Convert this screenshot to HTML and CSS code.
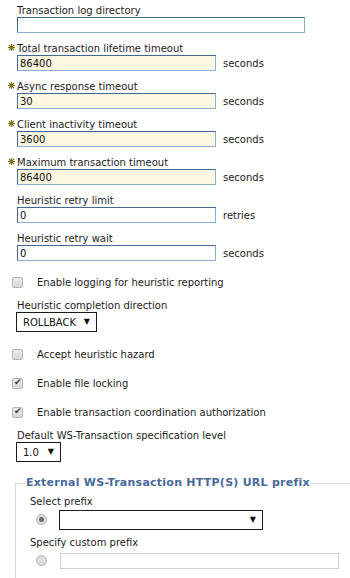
FILE: index.html
```html
<!DOCTYPE html>
<html lang="en">

<head>
    <meta http-equiv='Content-Type' content='text/html; charset=utf-8' />
    <meta name='viewport' content='width=device-width' />
    <link rel="stylesheet" href="styles.css">
</head>

<body>
    <form class="form" name="txform">
        <div class="field">
            <label class="lbl" for="logdir">Transaction log directory</label>
            <input id="logdir" class="txt wide" type="text">
        </div>
        <div class="field">
            <label class="lbl" for="total"><span class="req"><svg width="7" height="7" viewBox="0 0 7 7"><path d="M3.5 0v7M0 3.5h7M1 1l5 5M6 1l-5 5"/></svg></span>Total transaction lifetime timeout</label>
            <div class="row"><input id="total" class="txt need" type="text" value="86400"><span class="unit">seconds</span></div>
        </div>
        <div class="field">
            <label class="lbl" for="async"><span class="req"><svg width="7" height="7" viewBox="0 0 7 7"><path d="M3.5 0v7M0 3.5h7M1 1l5 5M6 1l-5 5"/></svg></span>Async response timeout</label>
            <div class="row"><input id="async" class="txt need" type="text" value="30"><span class="unit">seconds</span></div>
        </div>
        <div class="field">
            <label class="lbl" for="client"><span class="req"><svg width="7" height="7" viewBox="0 0 7 7"><path d="M3.5 0v7M0 3.5h7M1 1l5 5M6 1l-5 5"/></svg></span>Client inactivity timeout</label>
            <div class="row"><input id="client" class="txt need" type="text" value="3600"><span class="unit">seconds</span></div>
        </div>
        <div class="field">
            <label class="lbl" for="maxtx"><span class="req"><svg width="7" height="7" viewBox="0 0 7 7"><path d="M3.5 0v7M0 3.5h7M1 1l5 5M6 1l-5 5"/></svg></span>Maximum transaction timeout</label>
            <div class="row"><input id="maxtx" class="txt need" type="text" value="86400"><span class="unit">seconds</span></div>
        </div>
        <div class="field">
            <label class="lbl" for="retry">Heuristic retry limit</label>
            <div class="row"><input id="retry" class="txt" type="text" value="0"><span class="unit">retries</span></div>
        </div>
        <div class="field">
            <label class="lbl" for="wait">Heuristic retry wait</label>
            <div class="row"><input id="wait" class="txt" type="text" value="0"><span class="unit">seconds</span></div>
        </div>

        <label class="check first"><input class="cb" type="checkbox">Enable logging for heuristic reporting</label>

        <div class="field">
            <label class="lbl" for="dir">Heuristic completion direction</label>
            <span class="sel"><select id="dir" class="dd dir">
                <option selected>ROLLBACK</option>
                <option>COMMIT</option>
                <option>MANUAL</option>
            </select></span>
        </div>

        <label class="check"><input class="cb" type="checkbox">Accept heuristic hazard</label>
        <label class="check"><input class="cb" type="checkbox" checked>Enable file locking</label>
        <label class="check"><input class="cb" type="checkbox" checked>Enable transaction coordination authorization</label>

        <div class="field">
            <label class="lbl" for="level">Default WS-Transaction specification level</label>
            <span class="sel"><select id="level" class="dd level">
                <option selected>1.0</option>
                <option>1.1</option>
            </select></span>
        </div>

        <fieldset class="prefix">
            <legend>External WS-Transaction HTTP(S) URL prefix</legend>
            <div class="lbl sub">Select prefix</div>
            <div class="opt">
                <input class="rb" type="radio" name="pfx" checked>
                <span class="sel"><select class="dd pick"><option></option></select></span>
            </div>
            <div class="lbl sub">Specify custom prefix</div>
            <div class="opt">
                <input class="rb" type="radio" name="pfx">
                <input class="txt custom" type="text" disabled>
            </div>
        </fieldset>
    </form>
</body>

</html>
```

FILE: styles.css
```css
html {
    overflow: hidden;
}

body {
    margin: 0;
    background-color: white;
    font-family: "DejaVu Sans", Verdana, sans-serif;
    font-size: 10px;
    color: #1c1c1c;
}

.form {
    padding: 4px 0 0 12px;
}

.field {
    padding-left: 5px;
    margin-bottom: 9px;
}

.lbl {
    display: block;
    line-height: 13px;
}

.req {
    display: inline-block;
    width: 9px;
    margin-left: -9px;
    vertical-align: 1px;
}

.req svg {
    display: block;
    stroke: #7f6c14;
    stroke-width: 1.1;
}

.row {
    display: flex;
    align-items: center;
}

.txt {
    box-sizing: border-box;
    height: 16px;
    width: 199px;
    margin: 0;
    padding: 0 2px;
    font-family: inherit;
    font-size: 10px;
    color: #111;
    background-color: white;
    border: 1px solid;
    border-color: #3f6892 #8cb0d4 #8cb0d4 #3f6892;
    outline: none;
}

.txt.wide {
    width: 288px;
}

.txt.need {
    background-color: #fdf6e0;
}

.unit {
    margin-left: 7px;
}

.check {
    display: flex;
    align-items: center;
    height: 29px;
}

.check.first {
    margin-top: -2px;
}

.cb {
    appearance: none;
    -webkit-appearance: none;
    box-sizing: border-box;
    width: 11px;
    height: 11px;
    margin: 0 14px 0 0;
    border: 1px solid #b4b4b4;
    border-radius: 2px;
    background: linear-gradient(#ececec, #d9d9d9);
    position: relative;
}

.cb:checked::after {
    content: "\2714";
    position: absolute;
    left: 1px;
    top: -2px;
    font-size: 9px;
    color: #3a3a3a;
}

.sel {
    display: inline-block;
    position: relative;
    margin-left: -1px;
}

.sel::after {
    content: "\25BC";
    position: absolute;
    top: 5px;
    right: 7px;
    font-size: 8px;
    color: #111;
    pointer-events: none;
}

.dd {
    appearance: none;
    -webkit-appearance: none;
    box-sizing: border-box;
    height: 20px;
    margin: 0;
    padding: 0 0 0 6px;
    font-family: inherit;
    font-size: 10px;
    color: #111;
    background-color: white;
    border: 1px solid #1a1a1a;
    border-radius: 0;
    outline: none;
}

.dd.dir {
    width: 81px;
}

.dd.level {
    width: 45px;
}

.dd.pick {
    width: 204px;
}

.check + .field {
    margin-top: 2px;
    margin-bottom: 8px;
}

.prefix {
    margin: 14px -40px 0 3px;
    padding: 0 0 20px 14px;
    border: 1px solid #d8d8d8;
    border-right: none;
}

.prefix legend {
    padding: 0 1px 0 0;
    margin-left: -4px;
    font-size: 11px;
    font-weight: bold;
    letter-spacing: 0.25px;
    color: #48699a;
    line-height: 14px;
}

.sub {
    margin-top: 5px;
}

.opt {
    display: flex;
    align-items: center;
    height: 23px;
    padding-left: 6px;
}

.rb {
    appearance: none;
    -webkit-appearance: none;
    box-sizing: border-box;
    width: 11px;
    height: 11px;
    margin: 0 13px 0 0;
    border: 1px solid #b4b4b4;
    border-radius: 50%;
    background: #dedede;
    position: relative;
}

.rb:checked::after {
    content: "";
    position: absolute;
    left: 2px;
    top: 2px;
    width: 5px;
    height: 5px;
    border-radius: 50%;
    background: #6a6a6a;
}

.txt.custom {
    width: 279px;
    background-color: white;
    border-color: #cfcfcf;
}
```
